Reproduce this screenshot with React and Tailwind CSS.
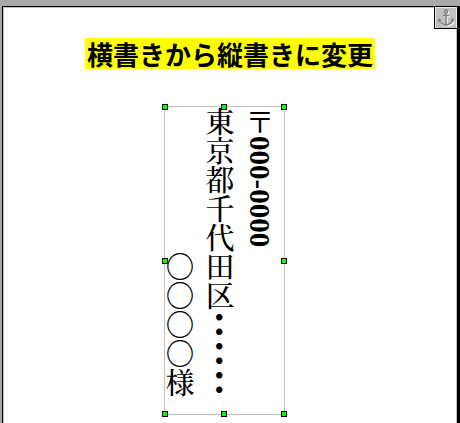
import React from 'react';

const handles = [
  'left-0 top-0',
  'left-1/2 top-0',
  'left-full top-0',
  'left-0 top-1/2',
  'left-full top-1/2',
  'left-0 top-full',
  'left-1/2 top-full',
  'left-full top-full',
];

const AnchorButton = () => (
  <button
    type="button"
    aria-label="Anchor"
    className="absolute right-0 top-0 flex h-[22px] w-[23px] items-center justify-center border-b border-l border-black bg-[#c0c0c0] shadow-[inset_1px_1px_0_#ececec,inset_-1px_0_0_#ececec]"
  >
    <svg width="18" height="18" viewBox="0 0 18 18" fill="none">
      <g transform="translate(1 1)" stroke="#f4f4f4" strokeWidth="1.5">
        <circle cx="9" cy="3" r="1.5" />
        <path d="M9 5v11M6 6.500h6M1.500 10.500c1 3.500 4 5 7.500 5.500c3.500-.5 6.500-2 7.500-5.500" />
      </g>
      <g stroke="#808080" strokeWidth="1.5">
        <circle cx="9" cy="2.500" r="1.5" />
        <path d="M9 4v12M6 6.500h6M2 11c1 3 4 4.500 7 5c3-.5 6-2 7-5" />
      </g>
      <path d="M.5 12.500l1.500-3.500 3 2.500zM17.500 12.500l-1.500-3.500-3 2.500zM7 15.500l2 2 2-2z" fill="#808080" />
    </svg>
  </button>
);

const TextFrame = () => (
  <div className="relative h-[309px] w-[121px] border border-[#c0c0c0]">
    <div className="h-full w-full whitespace-pre pr-1 font-['Noto_Serif_CJK_JP','Noto_Sans_CJK_JP',serif] text-[29px] font-medium leading-[40px] text-black [writing-mode:vertical-rl]">
      <p>〒<span className="font-['Liberation_Serif',serif] font-bold">000-0000</span></p>
      <p>東京都千代田区<span className="font-bold">･･････</span></p>
      <p>{'\u3000\u3000\u3000\u3000\u3000'}○○○○様</p>
    </div>
    {handles.map((place) => (
      <span
        key={place}
        className={`absolute size-[6px] -translate-x-1/2 -translate-y-1/2 border border-black bg-[#00ff00] ${place}`}
      />
    ))}
  </div>
);

const App = () => {
  return (
    <div lang="ja" className="flex h-screen flex-col overflow-hidden bg-[#a9a9a9] pl-[2px] pt-[6px]">
      <div className="flex flex-1 bg-black pr-[2px]">
        <main className="relative flex flex-1 flex-col items-center border-l border-r border-t border-black bg-white shadow-[inset_1px_1px_0_#c0c0c0,inset_-1px_0_0_#c0c0c0]">
          <AnchorButton />
          <h1 className="mt-[31px] bg-[#ffff00] px-[2px] font-['Noto_Sans_CJK_JP',sans-serif] text-[26px] font-bold leading-[31px] text-black">
            横書きから縦書きに変更
          </h1>
          <div className="mt-[37px] pr-3">
            <TextFrame />
          </div>
        </main>
      </div>
    </div>
  );
};

export default App;
